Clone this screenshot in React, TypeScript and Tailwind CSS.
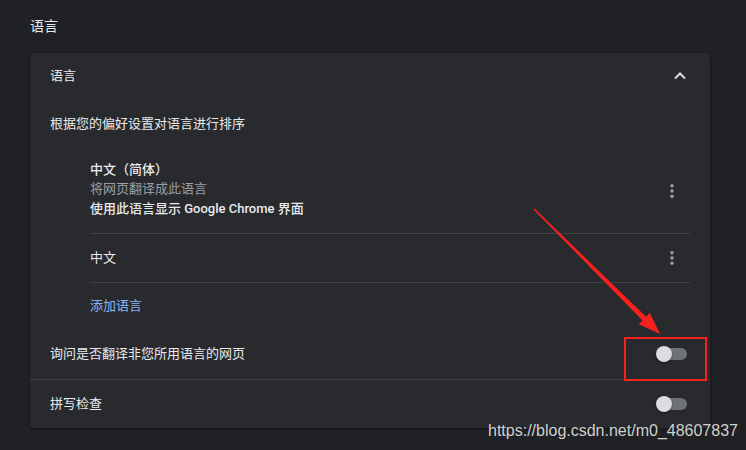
import React from "react";

const font = { fontFamily: 'Roboto, "Noto Sans CJK SC", "Liberation Sans", sans-serif' };

function Kebab() {
  return (
    <svg width="24" height="24" viewBox="0 0 24 24" className="mr-[6px]">
      <circle cx="12" cy="6.8" r="1.7" fill="#9aa0a6" />
      <circle cx="12" cy="12" r="1.7" fill="#9aa0a6" />
      <circle cx="12" cy="17.2" r="1.7" fill="#9aa0a6" />
    </svg>
  );
}

function Toggle() {
  return (
    <div className="relative w-[31px] h-[16px] mr-[23px]">
      <div className="absolute left-[3px] top-[2px] w-[28px] h-[12px] rounded-full bg-[#6f7377]" />
      <div className="absolute left-0 top-0 w-[16px] h-[16px] rounded-full bg-[#dadce0] shadow-[0_1px_2px_rgba(0,0,0,0.5)]" />
    </div>
  );
}

export default function App() {
  return (
    <div className="relative w-[746px] h-[450px] overflow-hidden bg-[#202124] text-[#e8eaed]" style={font}>
      <div className="pl-[30px] pt-[17px]">
        <div className="text-[14px] leading-[18px]">语言</div>
        <div className="mt-[18px] w-[680px] h-[375px] rounded-[4px] bg-[#292a2d] shadow-[0_1px_3px_rgba(0,0,0,0.45)] flex flex-col">
          <div className="h-[46px] flex items-center justify-between pl-[20px] pr-[20px] text-[13px]">
            <span>语言</span>
            <svg width="20" height="20" viewBox="0 0 20 20">
              <polyline points="5,12.5 10,7.5 15,12.5" fill="none" stroke="#dadce0" strokeWidth="2" />
            </svg>
          </div>
          <div className="h-[50px] flex items-center pl-[20px] text-[13px]">根据您的偏好设置对语言进行排序</div>
          <div className="ml-[60px] mr-[20px] flex flex-col">
            <div className="h-[85px] pt-[11px] flex items-center border-b border-[#3f4042]">
              <div className="flex-1 flex flex-col text-[13px] self-start">
                <div className="leading-[20px] font-medium">中文（简体）</div>
                <div className="leading-[18px] text-[#9aa0a6]">将网页翻译成此语言</div>
                <div className="leading-[22px] font-medium">使用此语言显示 Google Chrome 界面</div>
              </div>
              <div className="self-start mt-[19px]">
                <Kebab />
              </div>
            </div>
            <div className="h-[49px] flex items-center justify-between border-b border-[#3f4042] text-[13px]">
              <span>中文</span>
              <Kebab />
            </div>
            <div className="h-[45px] flex items-center text-[13px] text-[#8ab4f8]">添加语言</div>
          </div>
          <div className="h-[52px] flex items-center justify-between pl-[20px] text-[13px] border-b border-[#3f4042]">
            <span>询问是否翻译非您所用语言的网页</span>
            <Toggle />
          </div>
          <div className="flex-1 flex items-center justify-between pl-[20px] text-[13px]">
            <span>拼写检查</span>
            <Toggle />
          </div>
        </div>
      </div>

      <div className="absolute left-[624px] top-[337px] w-[83px] h-[44px] border-2 border-[#f5211c]" />
      <svg className="absolute left-0 top-0" width="746" height="450" viewBox="0 0 746 450">
        <polygon
          points="533.5,209.5 534.5,208.5 646.1,316.8 649.9,312.9 660,334 638.7,324.3 642.5,320.4"
          fill="#f5211c"
        />
      </svg>

      <div
        className="absolute left-[488px] top-[421px] text-[16px] leading-[20px] text-[#d0d0d0]"
        style={{ fontFamily: '"Liberation Sans", Arial, sans-serif' }}
      >
        https://blog.csdn.net/m0_48607837
      </div>
    </div>
  );
}
